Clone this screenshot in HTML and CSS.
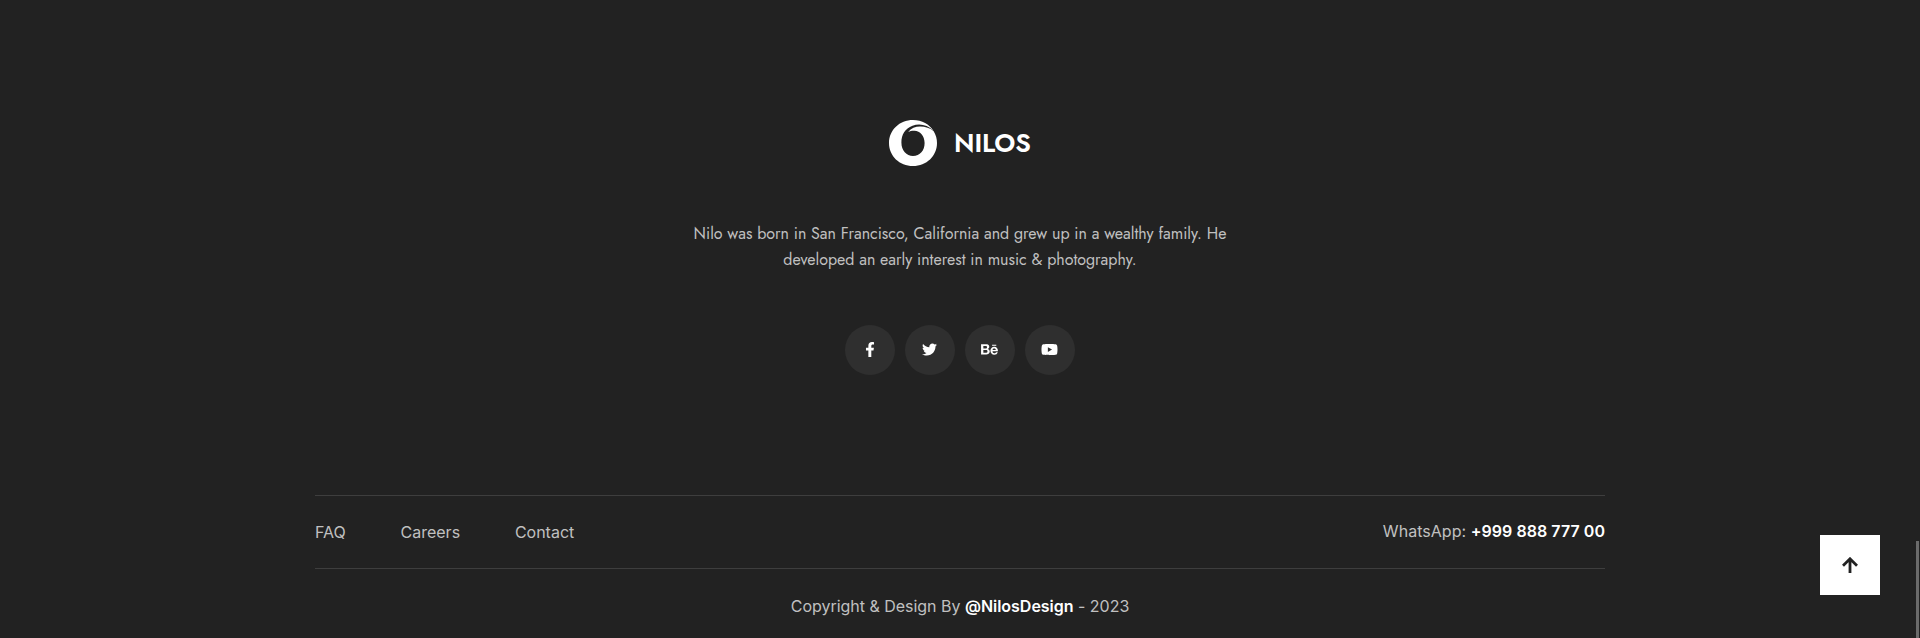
FILE: index.html
```html
<!DOCTYPE html>
<html lang="en">
<head>
<meta charset="utf-8">
<title>Nilos</title>
<link rel="stylesheet" href="styles.css">
</head>
<body>
<footer class="footer">
  <a class="brand">
    <svg class="brand-mark" viewBox="0 0 48 46">
      <path fill="#fff" fill-rule="evenodd" d="M24 0C33 0 40.500 4.500 44.500 10.800C38.500 4.800 30.500 3.200 23.500 5.800C16 8.600 12.400 15 12.400 22.500C12.400 30.500 17.500 36 24 36C31 36 35.600 30.500 35.600 23C35.600 15.500 31 11 25.500 10.700C23 10.600 21 11 19.200 12C22 8.300 26.500 6.600 31 6.600C36.500 6.600 41 8.200 44.700 11.200C47 15 48 19 48 23C48 36 37.500 46 24 46S0 36 0 23S10.500 0 24 0Z"/>
    </svg>
    <span class="brand-name">NILOS</span>
  </a>
  <p class="about">Nilo was born in San Francisco, California and grew up in a wealthy family. He<br>developed an early interest in music &amp; photography.</p>
  <div class="social">
    <a class="social-link" aria-label="Facebook"><svg width="10" height="15" viewBox="0 0 320 512"><path d="M279.140 288l14.220-92.660h-88.910v-60.130c0-25.350 12.420-50.060 52.240-50.060h40.420V6.260S260.430 0 225.360 0c-73.220 0-121.080 44.380-121.080 124.720v70.620H22.890V288h81.390v224h100.170V288z"/></svg></a>
    <a class="social-link" aria-label="Twitter"><svg width="15" height="15" viewBox="0 0 512 512"><path d="M459.370 151.716c.325 4.548.325 9.097.325 13.645 0 138.720-105.583 298.558-298.558 298.558-59.452 0-114.680-17.219-161.137-47.106 8.447.974 16.568 1.299 25.340 1.299 49.055 0 94.213-16.568 130.274-44.832-46.132-.975-84.792-31.188-98.112-72.772 6.498.974 12.995 1.624 19.818 1.624 9.421 0 18.843-1.300 27.614-3.573-48.081-9.747-84.143-51.980-84.143-102.985v-1.299c13.969 7.797 30.214 12.670 47.431 13.319-28.264-18.843-46.781-51.005-46.781-87.391 0-19.492 5.197-37.360 14.294-52.954 51.655 63.675 129.300 105.258 216.365 109.807-1.624-7.797-2.599-15.918-2.599-24.040 0-57.828 46.782-104.934 104.934-104.934 30.213 0 57.502 12.670 76.670 33.137 23.715-4.548 46.456-13.320 66.599-25.340-7.798 24.366-24.366 44.833-46.132 57.827 21.117-2.273 41.584-8.122 60.426-16.243-14.292 20.791-32.161 39.308-52.628 54.253z"/></svg></a>
    <a class="social-link" aria-label="Behance"><svg width="17" height="15" viewBox="0 0 576 512"><path d="M232 237.200c31.800-15.200 48.400-38.200 48.400-74 0-70.600-52.600-87.800-113.300-87.800H0v354.400h171.800c64.400 0 124.900-30.900 124.900-102.900 0-44.500-21.100-77.400-64.700-89.700zM77.900 135.900H151c28.100 0 53.400 7.900 53.400 40.500 0 30.100-19.700 42.200-47.500 42.200h-79v-82.700zm83.300 233.700H77.900V272h84.900c34.300 0 56 14.300 56 50.600 0 35.800-25.900 47-57.600 47zm358.500-240.700H376V94h143.700v34.900zM576 305.200c0-75.900-44.400-139.200-124.900-139.200-78.200 0-131.300 58.800-131.300 135.800 0 79.900 50.300 134.700 131.300 134.700 61.300 0 101-27.600 120.100-86.300H509c-6.700 21.900-34.300 33.500-55.700 33.500-41.300 0-63-24.200-63-65.300h185.100c.3-4.200.6-8.700.6-13.200zM390.400 274c2.300-33.700 24.700-54.800 58.500-54.800 35.400 0 53.200 20.800 56.200 54.800H390.400z"/></svg></a>
    <a class="social-link" aria-label="YouTube"><svg width="17" height="15" viewBox="0 0 576 512"><path d="M549.655 124.083c-6.281-23.650-24.787-42.276-48.284-48.597C458.781 64 288 64 288 64S117.220 64 74.629 75.486c-23.497 6.322-42.003 24.947-48.284 48.597-11.412 42.867-11.412 132.305-11.412 132.305s0 89.438 11.412 132.305c6.281 23.650 24.787 41.500 48.284 47.821C117.220 448 288 448 288 448s170.780 0 213.371-11.486c23.497-6.321 42.003-24.171 48.284-47.821 11.412-42.867 11.412-132.305 11.412-132.305s0-89.438-11.412-132.305zm-317.510 213.508V175.185l142.739 81.205-142.739 81.201z"/></svg></a>
  </div>
  <div class="bar">
    <nav class="links"><a>FAQ</a><a>Careers</a><a>Contact</a></nav>
    <p class="phone">WhatsApp: <b>+999 888 777 00</b></p>
  </div>
  <p class="copyright">Copyright &amp; Design By <b>@NilosDesign</b> - 2023</p>
</footer>
<a class="to-top" aria-label="Back to top"><svg width="16" height="16" viewBox="0 0 16 16"><path d="M8 16V2M1 8.700L8 1.800L15 8.700" fill="none" stroke="#222" stroke-width="2.800"/></svg></a>
<div class="scroll-thumb"></div>
</body>
</html>
```
FILE: styles.css
```css
* { box-sizing: border-box; }
body {
  margin: 0;
  height: 638px;
  overflow: hidden;
  background: #222;
  color: #c0c0c0;
  font: 16px/26px Inter, sans-serif;
}
p { margin: 0; }
b { color: #fff; font-weight: 600; }
.footer {
  width: 1290px;
  margin: 0 auto;
  padding-top: 120px;
  display: flex;
  flex-direction: column;
  align-items: center;
}
.brand {
  display: flex;
  align-items: center;
  gap: 17px;
  height: 46px;
}
.brand-mark { width: 48px; height: 46px; }
.brand-name {
  width: 77px;
  color: #fff;
  font: 600 26px/46px Jost, Lato, sans-serif;
  letter-spacing: -.1px;
  white-space: nowrap;
}
.about {
  margin-top: 55px;
  text-align: center;
  font-family: Jost, Lato, sans-serif;
  white-space: nowrap;
}
.social { display: flex; gap: 10px; margin-top: 52px; }
.social-link {
  width: 50px;
  height: 50px;
  padding: 0 1px 1px 0;
  border-radius: 50%;
  background: #2f2f2f;
  display: grid;
  place-items: center;
}
.social-link svg { fill: #fff; }
.bar {
  width: 100%;
  height: 74px;
  margin-top: 120px;
  padding-bottom: 2px;
  border-top: 1px solid #3e3e3e;
  border-bottom: 1px solid #3e3e3e;
  display: flex;
  justify-content: space-between;
  align-items: center;
}
.links { display: flex; gap: 54.8px; padding-top: 2px; }
.phone { letter-spacing: .04px; }
.copyright { margin-top: 24px; letter-spacing: -.02px; }
.to-top {
  position: absolute;
  right: 40px;
  top: 535px;
  width: 60px;
  height: 60px;
  background: #fff;
  display: grid;
  place-items: center;
}
.scroll-thumb {
  position: absolute;
  right: 1px;
  top: 541px;
  width: 3px;
  height: 97px;
  background: #6b6b6b;
}
```
